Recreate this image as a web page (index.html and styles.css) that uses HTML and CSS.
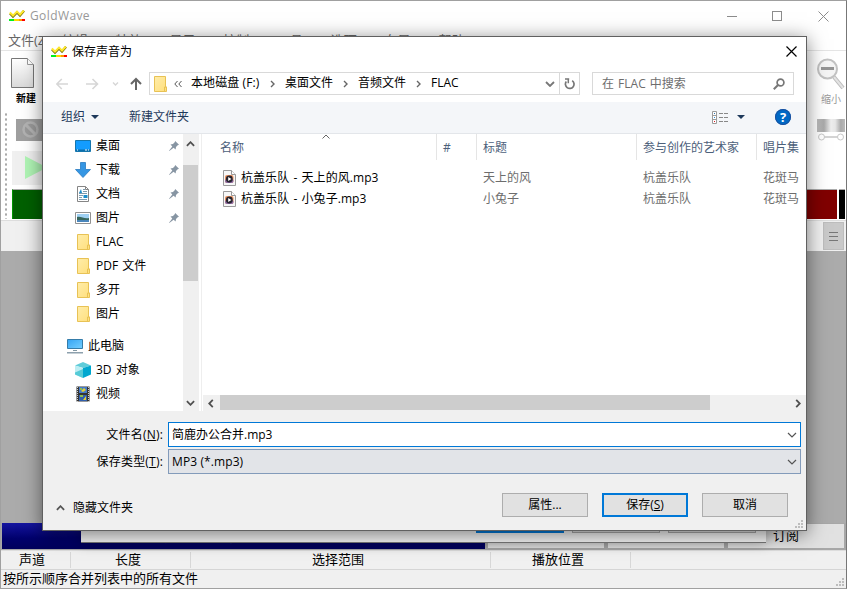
FILE: index.html
```
<!DOCTYPE html>
<html lang="zh-CN">
<head>
  <meta charset="UTF-8" />
  <meta name="viewport" content="width=device-width, initial-scale=1.0" />
  <title>GoldWave</title>
  <link rel="stylesheet" href="styles.css">
</head>
<body>
  <!-- shared icons -->
  <svg class="defs" width="0" height="0">
    <linearGradient id="folderFill" x1="0" y1="0" x2="1" y2="1"><stop offset="0" stop-color="#ffedaa" /><stop offset="1" stop-color="#ffdf7c" /></linearGradient>
    <linearGradient id="screenFill" x1="0" y1="0" x2="1" y2="1"><stop offset="0" stop-color="#35a4f3" /><stop offset="1" stop-color="#75cfff" /></linearGradient>
    <linearGradient id="pageFill" x1="0" y1="0" x2="0" y2="1"><stop offset="0" stop-color="#fff" /><stop offset="1" stop-color="#dadada" /></linearGradient>
    <symbol id="logo" viewBox="0 0 16 12">
      <path d="M1 3.5 4 6.5 8 2.5 11 5.5 15 .8" fill="none" stroke="#786f00" stroke-width="2.4" />
      <path d="M.8 2.6 4 5.6 8 1.6 11 4.6 14.8.5" fill="none" stroke="#ffe82c" stroke-width="2" />
      <path d="M0 9h5v2H0z" fill="#00ef20" /><path d="M5 9h5v2H5z" fill="#ffd800" /><path d="M10 9h3v2h-3z" fill="#ff9600" /><path d="M13 9h3v2h-3z" fill="#ff0000" />
    </symbol>
    <symbol id="folder" viewBox="0 0 14 16">
      <path d="M.5.5h11v10.500h1v4.500H.5z" fill="url(#folderFill)" stroke="#e8c255" />
      <path d="M10.500 15v-4h2" fill="none" stroke="#e8c255" />
    </symbol>
    <symbol id="pin" viewBox="0 0 10 10">
      <path d="M6.200 0 10 3.800 8.700 4.300 7 6 6.600 8.500 4.600 6.700 .3 10 0 9.700 3.300 5.400 1.500 3.400 4 3 5.700 1.300z" fill="#8795a3" />
    </symbol>
    <symbol id="audio" viewBox="0 0 13 16">
      <path d="M.5.5h8l4 4v11H.5z" fill="#f7f7f7" stroke="#9a9a9a" />
      <path d="M8.500.5v4h4" fill="#fff" stroke="#9a9a9a" />
      <rect x="2" y="5" width="8.500" height="8" rx="2" fill="#e99260" />
      <rect x="2" y="9" width="8.500" height="4" rx="2" fill="#8b6aa5" />
      <circle cx="6.300" cy="9" r="3.400" fill="#27242e" />
      <path d="M5.200 7 8.400 9 5.200 11z" fill="#fff" />
    </symbol>
    <symbol id="grip" viewBox="0 0 8 8">
      <path d="M6 0h2v2H6zM3 3h2v2H3zM6 3h2v2H6zM0 6h2v2H0zM3 6h2v2H3zM6 6h2v2H6z" fill="#bdbdbd" />
    </symbol>
    <symbol id="down" viewBox="0 0 10 6"><path d="M1 1 5 5 9 1" fill="none" stroke="currentColor" stroke-width="1.200" /></symbol>
  </svg>

  <div class="app">
    <div class="app-title">
      <svg width="16" height="12"><use href="#logo" /></svg>
      <span>GoldWave</span>
      <svg class="app-controls" width="102" height="11" viewBox="0 0 102 11" fill="none" stroke="#8c8c8c">
        <path d="M0 5.500h10M91.500.5l10 10M101.500.5l-10 10" /><rect x="45.500" y=".5" width="9" height="9" />
      </svg>
    </div>
    <div class="menu">
      <span>文件(Z)</span><span>编辑(Y)</span><span>特效(X)</span><span>显示(W)</span><span>控制(V)</span><span>工具(T)</span><span>选项(S)</span><span>布局(W)</span><span>帮助(H)</span>
    </div>
    <div class="tools">
      <div class="tools-left">
        <div class="new-file">
          <svg width="24" height="31" viewBox="0 0 24 31"><path d="M.5.5h16l6 6v23H.5z" fill="url(#pageFill)" stroke="#777" /><path d="M16.500.5v6h6" fill="#fff" stroke="#999" /></svg>
          <b>新建</b>
        </div>
        <div class="controls-left">
          <div class="handle"></div>
          <div class="stack">
            <div class="blocked"><svg width="17" height="17" viewBox="0 0 17 17"><circle cx="8.500" cy="8.500" r="7" fill="#999" stroke="#b2b2b2" stroke-width="2.500" /><path d="m4 4 9 9" stroke="#b2b2b2" stroke-width="3" /></svg></div>
            <div class="play"><svg width="22" height="23" viewBox="0 0 22 23"><path d="M0 0 22 11.500 0 23z" fill="#b0f5b5" /></svg></div>
            <div class="meter meter-green"></div>
          </div>
        </div>
      </div>
      <div class="tools-right">
        <div class="zoom-out">
          <svg width="28" height="32" viewBox="0 0 28 32"><path d="m17 19 9 11" stroke="#bbb" stroke-width="4" /><path d="m17 19 9 11" stroke="#e3e3e3" stroke-width="2" /><circle cx="10.500" cy="11" r="9.500" fill="#f5f5f5" stroke="#c2c2c2" stroke-width="2" /><path d="M4 9h13v3H4z" fill="#959595" /></svg>
          <span>缩小</span>
        </div>
        <div class="knob"></div>
        <svg class="slider" width="28" height="8" viewBox="0 0 28 8"><path d="M7 4h14" stroke="#d4d4d4" stroke-width="2" /><circle cx="4.500" cy="4" r="3" fill="#fff" stroke="#c8c8c8" /><circle cx="23.500" cy="4" r="3" fill="#fff" stroke="#c8c8c8" /></svg>
        <div class="meters"><div class="meter meter-red"></div><div class="meter meter-black"></div></div>
      </div>
    </div>
    <div class="strip"><div class="burger"><i></i><i></i><i></i></div></div>
    <div class="workspace"></div>
    <div class="banner">
      <div class="promo">文合并 试用版本中，购买请点击这里。</div>
      <div class="tab"></div><div class="tab"></div><div class="tab">订阅</div>
    </div>
    <div class="columns">
      <span class="col-channel">声道</span><span class="col-length">长度</span><span class="col-range">选择范围</span><span class="col-play">播放位置</span>
    </div>
    <div class="status">按所示顺序合并列表中的所有文件<svg width="8" height="8"><use href="#grip" /></svg></div>
  </div>

  <div class="merge-window">
    <div class="merge-buttons"><i class="blue"></i><i></i><i></i></div>
  </div>

  <div class="dialog">
    <div class="dialog-title">
      <svg width="16" height="12"><use href="#logo" /></svg>
      <span>保存声音为</span>
      <svg class="close" width="11" height="11" viewBox="0 0 11 11"><path d="m.5.5 10 10M10.500.5l-10 10" stroke="#000" stroke-width="1.200" /></svg>
    </div>

    <div class="nav">
      <svg class="arrows" width="90" height="14" viewBox="0 0 90 14" fill="none" stroke="#d6d6d6" stroke-width="1.600">
        <path d="M12 7H.8M5.800 2l-5 5 5 5M30 7h11.500M36.500 2l5 5-5 5" />
        <path d="m57 5.500 2.500 2.500 2.500-2.500" stroke-width="1.400" />
        <path d="M80 13V2M75 7l5-5 5 5" stroke="#666" stroke-width="2" />
      </svg>
      <div class="address">
        <svg width="14" height="16"><use href="#folder" /></svg>
        <svg class="dbl" width="8" height="8" viewBox="0 0 8 8"><path d="M3.500 1 .8 4l2.700 3M7.500 1 4.800 4l2.700 3" fill="none" stroke="#555" /></svg>
        <span class="crumb-drive">本地磁盘 (F:)</span>
        <svg class="sep" width="5" height="8" viewBox="0 0 5 8"><path d="m1 1 3 3-3 3" /></svg>
        <span>桌面文件</span>
        <svg class="sep" width="5" height="8" viewBox="0 0 5 8"><path d="m1 1 3 3-3 3" /></svg>
        <span>音频文件</span>
        <svg class="sep" width="5" height="8" viewBox="0 0 5 8"><path d="m1 1 3 3-3 3" /></svg>
        <span>FLAC</span>
        <svg class="address-down" width="10" height="6" viewBox="0 0 10 6"><path d="M1 1 5 5 9 1" fill="none" stroke="#777" stroke-width="1.800" /></svg>
        <div class="refresh"><svg width="11" height="12" viewBox="0 0 11 12"><path d="M8.200 2.600A4.300 4.300 0 1 1 2.300 3.500" fill="none" stroke="#777" stroke-width="1.700" /><path d="M1 1h4.200M4.300 1v4.200" fill="none" stroke="#777" stroke-width="1.500" /></svg></div>
      </div>
      <div class="search">
        <span>在 FLAC 中搜索</span>
        <svg width="12" height="12" viewBox="0 0 12 12" fill="none" stroke="#777"><circle cx="7.500" cy="4.500" r="3.400" stroke-width="1.700" /><path d="M5 7 .8 11.200" stroke-width="2" /></svg>
      </div>
    </div>

    <div class="commands">
      <span>组织</span><i class="tri"></i><span class="new-folder">新建文件夹</span>
      <svg class="view" width="17" height="13" viewBox="0 0 17 13"><path d="M.5.5h4v12h-4zM.5 4.500h4M.5 8.500h4" fill="#fff" stroke="#9b9b9b" /><path d="M2 2h1v1H2z" fill="#2f75b5" /><path d="M2 6h1v1H2z" fill="#278bd8" /><path d="M2 10h1v1H2z" fill="#e21c24" /><path d="M7 2.500h4M12 2.500h4M7 6.500h4M12 6.500h4M7 10.500h4M12 10.500h4" stroke="#888" /></svg>
      <i class="tri"></i>
      <span class="help">?</span>
    </div>

    <div class="browser">
      <div class="places">
        <div class="place"><svg width="16" height="16" viewBox="0 0 16 16"><path d="M.5 2.500h15v11H.5z" fill="#139cff" stroke="#1676ad" /><path d="M1 11.500h14v1.500H1z" fill="#0a6fad" /><path d="M2 12h1m7 0h2m1 0h1" stroke="#fff" /></svg><span>桌面</span><svg class="pin" width="10" height="10"><use href="#pin" /></svg></div>
        <div class="place"><svg width="16" height="16" viewBox="0 0 16 16"><path d="M5.500.5h5v7h5L8 15.500.5 7.500h5z" fill="#3596e3" stroke="#287bc2" stroke-width=".8" /></svg><span>下载</span><svg class="pin" width="10" height="10"><use href="#pin" /></svg></div>
        <div class="place"><svg width="16" height="16" viewBox="0 0 16 16"><path d="M2.500.5h8l3 3v12h-11z" fill="#fff" stroke="#858585" /><path d="M10.500.5v3h3" fill="none" stroke="#858585" /><path d="M8 3.500h2M8 5.500h4M4 7.500h8M4 9.500h4M4 11.500h3M4 13.500h8" stroke="#7c9baf" /><path d="m4 7 2-4 1 4M8.500 9h4v3h-4z" fill="#1b8dca" /></svg><span>文档</span><svg class="pin" width="10" height="10"><use href="#pin" /></svg></div>
        <div class="place"><svg width="16" height="16" viewBox="0 0 16 16"><path d="M.5 2.500h15v11H.5z" fill="#fff" stroke="#919191" /><path d="M2 4h12v8H2z" fill="#9fd0f2" /><path d="M2 7c4-1 7 2 12 1v4H2z" fill="#37665c" /><path d="M2 10h12v2H2z" fill="#4a86bb" /></svg><span>图片</span><svg class="pin" width="10" height="10"><use href="#pin" /></svg></div>
        <div class="place"><svg class="folder" width="14" height="16"><use href="#folder" /></svg><span>FLAC</span></div>
        <div class="place"><svg class="folder" width="14" height="16"><use href="#folder" /></svg><span>PDF 文件</span></div>
        <div class="place"><svg class="folder" width="14" height="16"><use href="#folder" /></svg><span>多开</span></div>
        <div class="place"><svg class="folder" width="14" height="16"><use href="#folder" /></svg><span>图片</span></div>
        <div class="place computer"><svg width="16" height="16" viewBox="0 0 16 16"><path d="M.5 1.500h15v9H.5z" fill="url(#screenFill)" stroke="#357ca9" /><path d="M6 12h4v1H6z" fill="#8298a5" /><path d="M0 14h16v1.500H0z" fill="#8da0ad" /></svg><span>此电脑</span></div>
        <div class="place"><svg width="16" height="16" viewBox="0 0 16 16"><path d="M0 3.500 8 0l8 3.500L8 6z" fill="#60ccd9" /><path d="M0 3.500 8 6v10l-8-3.500z" fill="#bdeef3" /><path d="M8 6l8-2.500v9L8 16z" fill="#00a7cf" /><path d="M0 10.500 8 7v9l-8-3.500z" fill="#56cbd7" /></svg><span>3D 对象</span></div>
        <div class="place"><svg width="16" height="16" viewBox="0 0 16 16"><path d="M1.500.5h13v15h-13z" fill="#333" /><path d="M2.500 1v15M13.500 1v15" stroke="#ccc" stroke-dasharray="1 1" /><path d="M4 1h8v6H4z" fill="#457ac7" /><path d="M4 9h8v6H4z" fill="#315fac" /><path d="m6 5 3-3 2 2-3 2zM8 14l3-4v4z" fill="#e3cf36" /><path d="M5 2h2v2H5zM5 9h3v2H5z" fill="#8dbd4e" /></svg><span>视频</span></div>
      </div>
      <div class="vscroll">
        <svg width="9" height="6" viewBox="0 0 10 6"><path d="M1 5 5 1 9 5" fill="none" stroke="#505050" stroke-width="2" /></svg>
        <div class="vthumb"></div>
        <svg width="9" height="6" viewBox="0 0 10 6"><path d="M1 1 5 5 9 1" fill="none" stroke="#505050" stroke-width="2" /></svg>
      </div>
      <div class="files">
        <div class="row head">
          <span class="name">名称</span><span class="num">#</span><span class="song">标题</span><span class="artist">参与创作的艺术家</span><span class="album">唱片集</span>
          <svg class="sort" width="8" height="5" viewBox="0 0 8 5"><path d="M.5 4.500 4 1l3.500 3.500" fill="none" stroke="#666" /></svg>
        </div>
        <div class="row">
          <span class="name"><svg width="13" height="16"><use href="#audio" /></svg>杭盖乐队 - 天上的风.mp3</span><span class="num"></span><span class="song">天上的风</span><span class="artist">杭盖乐队</span><span class="album">花斑马</span>
        </div>
        <div class="row">
          <span class="name"><svg width="13" height="16"><use href="#audio" /></svg>杭盖乐队 - 小兔子.mp3</span><span class="num"></span><span class="song">小兔子</span><span class="artist">杭盖乐队</span><span class="album">花斑马</span>
        </div>
        <div class="hscroll">
          <svg width="6" height="9" viewBox="0 0 6 10"><path d="M5 1 1 5l4 4" fill="none" stroke="#505050" stroke-width="2" /></svg>
          <div class="hthumb"></div>
          <svg class="hnext" width="6" height="9" viewBox="0 0 6 10"><path d="m1 1 4 4-4 4" fill="none" stroke="#505050" stroke-width="2" /></svg>
        </div>
      </div>
    </div>

    <div class="fields">
      <div class="field"><label>文件名(<u>N</u>):</label><div class="box focused"><span>简鹿办公合并.mp3</span><svg width="10" height="6"><use href="#down" /></svg></div></div>
      <div class="field"><label>保存类型(<u>T</u>):</label><div class="box combo"><span>MP3 (*.mp3)</span><svg width="10" height="6"><use href="#down" /></svg></div></div>
    </div>
    <div class="actions">
      <div class="hide"><svg width="9" height="6" viewBox="0 0 10 6"><path d="M1 5 5 1 9 5" fill="none" stroke="#555" stroke-width="2" /></svg>隐藏文件夹</div>
      <button>属性...</button>
      <button class="primary">保存(<u>S</u>)</button>
      <button>取消</button>
    </div>
    <svg class="dialog-grip" width="8" height="8"><use href="#grip" /></svg>
  </div>
</body>
</html>
```

FILE: styles.css
```
* {
  margin: 0;
  padding: 0;
  box-sizing: border-box;
}

body {
  width: 847px;
  height: 589px;
  overflow: hidden;
  position: relative;
  font-family: 'Open Sans', 'Noto Sans CJK SC', sans-serif;
  font-size: 12px;
  line-height: 16px;
  color: #000;
  white-space: nowrap;
}

svg {
  display: block;
  flex: none;
}

.defs {
  position: absolute;
}

/* main window */
.app {
  width: 847px;
  height: 589px;
  border: 1px solid #a0a0a0;
  border-right-color: #777;
  display: flex;
  flex-direction: column;
  background: #fff;
}

.app-title {
  height: 30px;
  padding-left: 8px;
  display: flex;
  align-items: center;
  color: #999;
}

.app-title span {
  margin-left: 5px;
  letter-spacing: 0.4px;
}

.app-controls {
  margin-left: auto;
  margin-right: 17px;
}

.menu {
  height: 20px;
  padding: 0 7px;
  display: flex;
  font-size: 13px;
  line-height: 18px;
  color: #666;
  border-bottom: 1px solid #e5e5e5;
}

.menu span {
  width: 53.8px;
}

.tools {
  height: 169px;
  display: flex;
  justify-content: space-between;
}

.tools-left {
  width: 60px;
}

.new-file {
  height: 61px;
  padding: 7px 0 0 10px;
  font-size: 10px;
}

.new-file b {
  display: block;
  margin: 1px 0 0 5px;
}

.controls-left {
  display: flex;
}

.handle {
  width: 11px;
  height: 107px;
  background: radial-gradient(circle, #aaa 1px, transparent 1.3px) 3px 0 / 4px 5px repeat-y;
}

.stack {
  flex: 1;
}

.blocked {
  height: 22px;
  margin: 7px 0 0 4px;
  padding: 2px 6px;
  background: #9f9f9f;
}

.play {
  height: 34px;
  margin-top: 10px;
  padding: 5px 13px;
  background: #f0f0f0;
}

.meter {
  height: 30px;
  border-top: 1px solid #aaa;
}

.meter-green {
  margin-top: 4px;
  background: #006000;
  border-left: 1px solid #009500;
}

.tools-right {
  width: 45px;
}

.zoom-out {
  height: 68px;
  padding: 7px 0 0 16px;
  color: #999;
  font-size: 10px;
}

.zoom-out span {
  display: block;
  margin: 1px 0 0 4px;
}

.knob {
  height: 13px;
  margin: 0 1px 0 16px;
  background: linear-gradient(90deg, #bbb, #aaa 25%, #eee 50%, #e6e6e6 65%, #aaa 85%, #bbb);
}

.slider {
  margin: 1px 0 0 16px;
}

.meters {
  display: flex;
  margin-top: 48px;
  gap: 2px;
}

.meter-red {
  width: 36px;
  background: #800000;
}

.meter-black {
  width: 6px;
  background: #000;
}

.strip {
  height: 31px;
  padding: 1px 2px;
  display: flex;
  justify-content: flex-end;
  background: #f0f0f0;
  border-top: 1px solid #ddd;
}

.burger {
  width: 21px;
  padding: 9px 5px;
  background: #c9c9c9;
  border: 1px solid #bdbdbd;
}

.burger i {
  display: block;
  height: 1px;
  margin-bottom: 3px;
  background: #777;
}

.workspace {
  height: 272px;
  background: #ababab;
}

.banner {
  height: 27px;
  display: flex;
  gap: 4px;
  padding: 0 1px 2px;
  background: #a7a7a7;
}

.promo {
  width: 483px;
  height: 26px;
  margin-right: -1px;
  padding-left: 94px;
  background: linear-gradient(#1515a0, #00006c 60%, #00005c);
  color: #ddd;
  font-size: 16px;
  line-height: 25px;
}

.tab {
  width: 116px;
  margin-top: 1px;
  background: #e1e1e1;
  text-align: center;
  font-size: 13px;
  line-height: 22px;
}

.columns {
  height: 20px;
  display: flex;
  background: #f0f0f0;
  border-top: 1px solid #ddd;
  border-bottom: 1px solid #d5d5d5;
  font-size: 13px;
}

.columns span {
  height: 16px;
  margin-top: 1px;
  line-height: 15px;
  border-right: 1px solid #d7d7d7;
}

.col-channel {
  width: 70px;
  padding-left: 18px;
}

.col-length {
  width: 120px;
  padding-left: 44px;
}

.col-range {
  width: 300px;
  padding-left: 121px;
}

.col-play {
  width: 140px;
  padding-left: 41px;
}

.status {
  height: 18px;
  padding: 0 2px;
  display: flex;
  justify-content: space-between;
  background: #f0f0f0;
  font-size: 13px;
}

.status svg {
  margin-top: 8px;
}

/* window between the main one and the dialog */
.merge-window {
  position: absolute;
  left: 81px;
  top: 300px;
  width: 685px;
  height: 243px;
  display: flex;
  align-items: flex-end;
  justify-content: flex-end;
  padding: 0 10px 9px;
  background: #f0f0f0;
  border-bottom: 1px solid #777;
  box-shadow: 0 0 12px rgba(0, 0, 0, 0.3);
}

.merge-buttons {
  display: flex;
  gap: 8px;
}

.merge-buttons i {
  width: 88px;
  height: 24px;
  border: 1px solid #a8a8a8;
  background: #ddd;
}

.merge-buttons .blue {
  border: 2px solid #0078d7;
}

/* save dialog */
.dialog {
  position: absolute;
  left: 42px;
  top: 36px;
  width: 765px;
  height: 495px;
  display: flex;
  flex-direction: column;
  background: #f0f0f0;
  border: 1px solid #606060;
  box-shadow: 0 3px 18px rgba(0, 0, 0, 0.5);
}

.dialog-title {
  height: 29px;
  padding: 0 9px 0 8px;
  display: flex;
  align-items: center;
  background: #fff;
}

.dialog-title span {
  margin-left: 5px;
}

.close {
  margin-left: auto;
}

.nav {
  height: 36px;
  padding: 6px 12px 7px 13px;
  display: flex;
  background: #fff;
}

.arrows {
  margin-top: 5px;
}

.address {
  width: 431px;
  height: 23px;
  margin-left: 3px;
  padding-left: 4px;
  display: flex;
  align-items: center;
  border: 1px solid #d9d9d9;
}

.address span {
  margin-top: -1px;
}

.dbl {
  margin-left: 6px;
}

.address .crumb-drive {
  width: 70px;
  margin-left: 9px;
  letter-spacing: 0.1px;
}

.sep {
  margin: 0 10px;
  fill: none;
  stroke: #666;
  stroke-width: 1.4px;
}

.crumb-drive + .sep {
  margin-left: 9px;
}

.address-down {
  margin-left: auto;
  margin-right: 4px;
}

.refresh {
  width: 20px;
  height: 21px;
  padding: 5px 4px;
  border-left: 1px solid #d9d9d9;
}

.search {
  width: 202px;
  margin-left: 12px;
  padding: 0 8px 0 9px;
  display: flex;
  align-items: center;
  justify-content: space-between;
  color: #6d6d6d;
  word-spacing: 1px;
  border: 1px solid #d9d9d9;
}

.commands {
  height: 32px;
  padding: 0 15px 1px 18px;
  display: flex;
  align-items: center;
  background: #f4f6f9;
  border-bottom: 1px solid #e3e6ea;
  color: #1e395b;
}

.tri {
  margin-left: 6px;
  border: 4px solid transparent;
  border-top: 4px solid #1e395b;
  border-bottom: 0;
}

.new-folder {
  margin-left: 30px;
}

.view {
  margin-left: auto;
}

.view + .tri {
  margin-left: 8px;
}

.help {
  width: 16px;
  height: 16px;
  margin-left: 30px;
  border-radius: 50%;
  background: #0069c5;
  outline: 1px solid #1d4e9c;
  outline-offset: -1px;
  color: #fff;
  font-size: 13px;
  font-weight: 700;
  text-align: center;
}

.browser {
  height: 277px;
  display: flex;
  background: #fff;
}

.places {
  width: 140px;
}

.place {
  height: 24px;
  padding: 0 4px 0 32px;
  display: flex;
  align-items: center;
}

.place span {
  margin-left: 5px;
  word-spacing: 1px;
}

.place .folder {
  margin: 0 0 0 2px;
}

.place.computer {
  margin-top: 8px;
  padding-left: 24px;
}

.pin {
  margin-left: auto;
}

.vscroll {
  width: 16px;
  padding: 7px 1px 5px 0;
  display: flex;
  flex-direction: column;
  align-items: center;
  background: #f0f0f0;
}

.vthumb {
  width: 15px;
  height: 116px;
  margin: 18px 0 auto;
  background: #cdcdcd;
}

.files {
  flex: 1;
  margin-left: 2px;
  border-left: 1px solid #eee;
  display: flex;
  flex-direction: column;
  overflow: hidden;
}

.row {
  height: 21px;
  display: flex;
  align-items: center;
  color: #6d6d6d;
}

.row span {
  flex: none;
  padding-left: 6px;
}

.row .name {
  width: 235px;
  padding-left: 21px;
  display: flex;
  align-items: center;
  gap: 5px;
  color: #000;
  letter-spacing: 0.06px;
  word-spacing: 1px;
}

.row .num {
  width: 40px;
}

.row .song {
  width: 160px;
}

.row .artist {
  width: 120px;
}

.head {
  height: 26px;
  margin-bottom: 7px;
  position: relative;
  color: #4c607a;
}

.row.head span {
  height: 26px;
  line-height: 27px;
  border-right: 1px solid #e5e5e5;
}

.row.head .name {
  padding-left: 18px;
  color: #4c607a;
}

.row.head .album {
  border-right: 0;
}

.sort {
  position: absolute;
  left: 120px;
  top: 0;
}

.hscroll {
  height: 16px;
  margin: auto 0 0 1px;
  padding: 0 5px;
  display: flex;
  align-items: center;
  background: #f0f0f0;
}

.hthumb {
  width: 490px;
  height: 15px;
  margin: -1px 0 0 6px;
  background: #cdcdcd;
}

.hnext {
  margin-left: auto;
}

.fields {
  padding: 11px 5px 0 0;
  display: flex;
  flex-direction: column;
  gap: 2px;
}

.field {
  display: flex;
  align-items: center;
  justify-content: flex-end;
}

.field label {
  margin-right: 5px;
  letter-spacing: 0.2px;
}

.box {
  width: 633px;
  height: 25px;
  padding: 0 3px;
  display: flex;
  align-items: center;
  justify-content: space-between;
  border: 1px solid #839bba;
  background: #e2e4e8;
  color: #000;
}

.combo {
  letter-spacing: 0.1px;
}

.box svg {
  color: #555;
}

.focused {
  background: #fff;
  border-color: #0078d7;
}

.actions {
  padding: 19px 18px 0 13px;
  display: flex;
  gap: 14px;
}

.hide {
  margin-right: auto;
  padding-top: 5px;
  display: flex;
  align-items: center;
  gap: 8px;
}

button {
  width: 86px;
  height: 24px;
  border: 1px solid #adadad;
  background: #e1e1e1;
  color: #000;
  font: inherit;
}

.primary {
  border: 2px solid #0078d7;
}

.dialog-grip {
  position: absolute;
  right: 3px;
  bottom: 2px;
}
```
